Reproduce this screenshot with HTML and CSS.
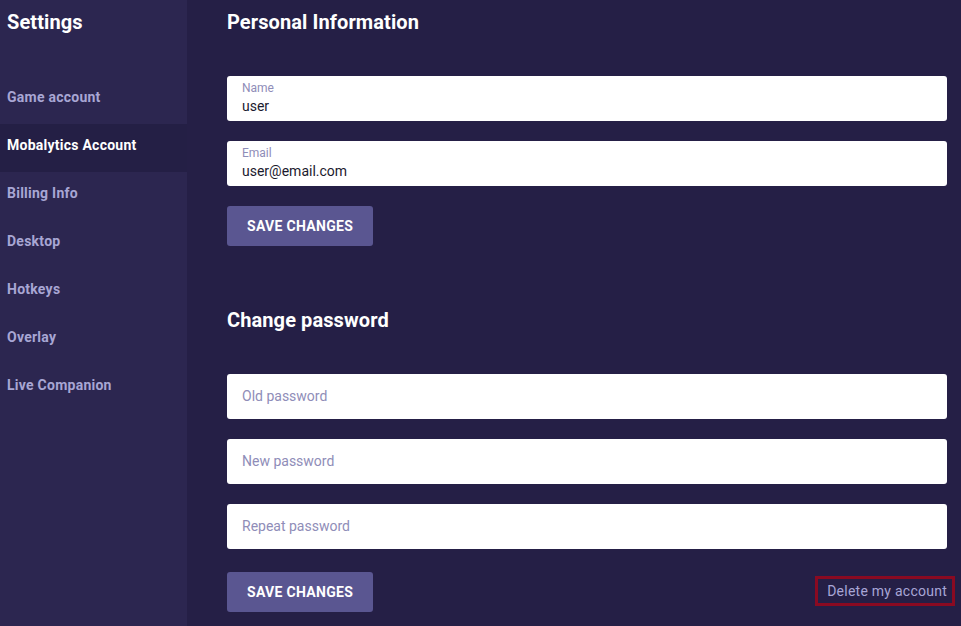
FILE: index.html
```html
<!DOCTYPE html>
<html lang="en">
<head>
    <meta charset="UTF-8">
    <meta name="viewport" content="width=device-width, initial-scale=1.0">
    <title>Settings - Mobalytics Account</title>
    <link rel="stylesheet" href="styles.css">
</head>
<body>
    <!-- side menu -->
    <aside class="sidebar">
        <h1 class="sidebar-title">Settings</h1>
        <nav class="menu">
            <a class="menu-item">Game account</a>
            <a class="menu-item active">Mobalytics Account</a>
            <a class="menu-item">Billing Info</a>
            <a class="menu-item">Desktop</a>
            <a class="menu-item">Hotkeys</a>
            <a class="menu-item">Overlay</a>
            <a class="menu-item">Live Companion</a>
        </nav>
    </aside>

    <main class="content">
        <!-- personal info -->
        <section class="section">
            <h2 class="section-title">Personal Information</h2>
            <div class="field filled">
                <span class="field-label">Name</span>
                <span class="field-value">user</span>
            </div>
            <div class="field filled">
                <span class="field-label">Email</span>
                <span class="field-value">user@email.com</span>
            </div>
            <div class="actions">
                <button class="btn">Save changes</button>
            </div>
        </section>

        <!-- password -->
        <section class="section password">
            <h2 class="section-title">Change password</h2>
            <div class="field"><span class="placeholder">Old password</span></div>
            <div class="field"><span class="placeholder">New password</span></div>
            <div class="field"><span class="placeholder">Repeat password</span></div>
            <div class="actions bottom">
                <button class="btn">Save changes</button>
                <a class="delete-link">Delete my account</a>
            </div>
        </section>
    </main>
</body>
</html>
```

FILE: styles.css
```css
/* base */
body {
    margin: 0;
    height: 626px;
    display: flex;
    font-family: Roboto, 'Liberation Sans', sans-serif;
    letter-spacing: 0.25px;
    background: #251f46;
    overflow: hidden;
}

/* side menu */
.sidebar {
    width: 187px;
    flex-shrink: 0;
    background: #2c2650;
}

.sidebar-title {
    margin: 0 0 32px;
    padding-left: 7px;
    font-size: 20px;
    line-height: 44px;
    font-weight: 700;
    letter-spacing: 0.1px;
    color: #fff;
}

.menu {
    display: flex;
    flex-direction: column;
}

.menu-item {
    height: 48px;
    line-height: 42px;
    padding-left: 7px;
    box-sizing: border-box;
    font-size: 14px;
    font-weight: 700;
    color: #a8a6d4;
    cursor: pointer;
}

.menu-item.active {
    background: #241f45;
    color: #fff;
}

/* main area */
.content {
    flex: 1;
    padding: 0 14px 0 40px;
}

.section {
    display: flex;
    flex-direction: column;
    gap: 20px;
}

.section.password {
    margin-top: 52px;
}

.section-title {
    margin: 0 0 12px;
    font-size: 20px;
    line-height: 44px;
    font-weight: 700;
    letter-spacing: 0.1px;
    color: #fff;
}

/* inputs */
.field {
    height: 45px;
    box-sizing: border-box;
    background: #fff;
    border-radius: 3px;
    padding: 0 15px 2px;
    display: flex;
    flex-direction: column;
    justify-content: center;
    letter-spacing: 0;
}

.field.filled {
    justify-content: flex-start;
    padding-top: 5px;
}

.field-label {
    font-size: 12px;
    line-height: 14px;
    color: #8f8db8;
}

.field-value {
    margin-top: 2px;
    font-size: 14px;
    line-height: 18px;
    color: #1b1a2e;
}

.placeholder {
    font-size: 14px;
    color: #8f8db8;
}

/* buttons */
.actions {
    display: flex;
    align-items: center;
    justify-content: space-between;
}

.actions.bottom {
    margin-top: 3px;
}

.btn {
    height: 40px;
    padding: 0 20px;
    background: #5a5691;
    border: none;
    border-radius: 3px;
    color: #fff;
    font-family: inherit;
    font-size: 14px;
    font-weight: 700;
    letter-spacing: 0.3px;
    text-transform: uppercase;
    cursor: pointer;
}

.delete-link {
    margin-bottom: 2px;
    padding-left: 4px;
    font-size: 14px;
    line-height: 14px;
    color: #a8a6d6;
    outline: 3px solid #8a0a22;
    outline-offset: 5px;
    cursor: pointer;
}
```
